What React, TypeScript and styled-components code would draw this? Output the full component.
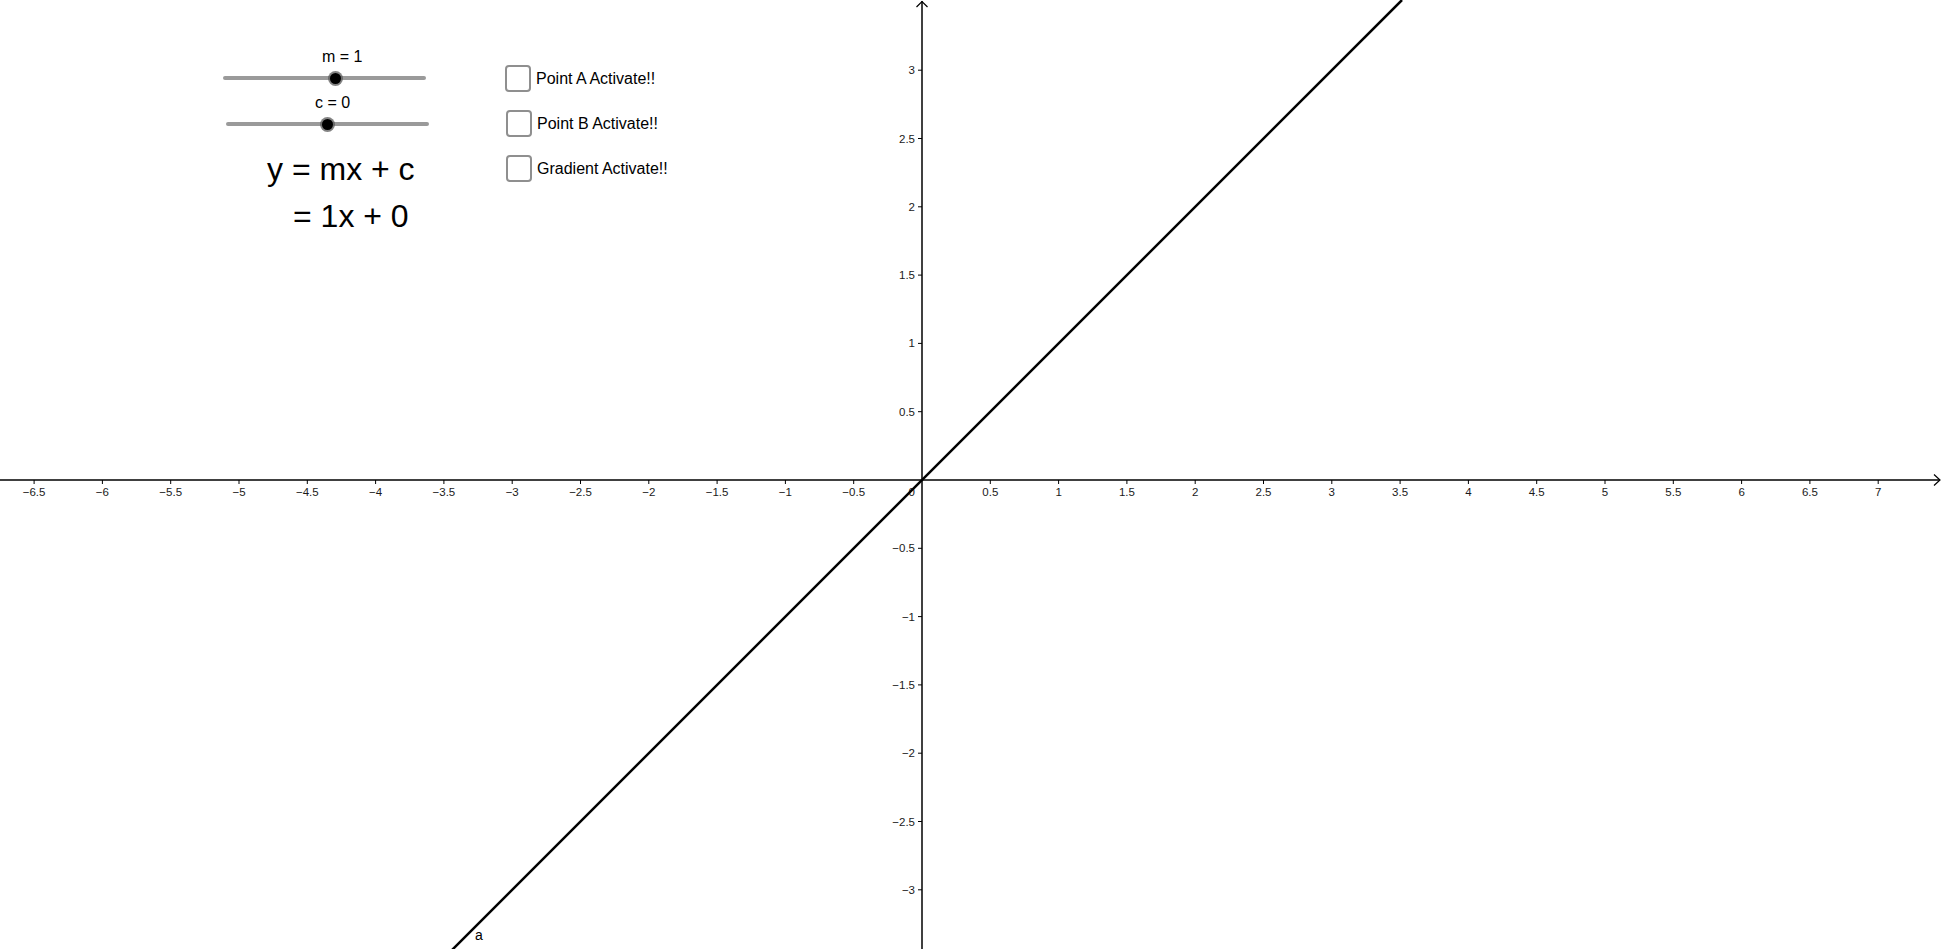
import React from "react";
import styled, { createGlobalStyle } from "styled-components";

const GlobalStyle = createGlobalStyle`
  html, body { margin: 0; padding: 0; background: #ffffff; }
  body { font-family: "Liberation Sans", Arial, sans-serif; color: #000; }
  #root { width: 100vw; height: 100vh; }
`;

const W = 1942;
const H = 949;
const OX = 922;
const OY = 480;
const U = 136.6;

const Page = styled.div`
  position: relative;
  width: 100%;
  height: 100%;
  overflow: hidden;
  background: #ffffff;
`;

const GraphSvg = styled.svg`
  display: block;
`;

const AxisLabel = styled.text`
  font-family: "Liberation Sans", Arial, sans-serif;
  font-size: 11.5px;
  fill: #1a1a1a;
`;

const CurveLabel = styled.text`
  font-family: "Liberation Sans", Arial, sans-serif;
  font-size: 14px;
  fill: #000;
`;

const Overlay = styled.div`
  position: absolute;
  top: 0;
  left: 0;
  display: flex;
  align-items: flex-start;
`;

const SliderColumn = styled.div`
  margin-left: 223px;
  padding-top: 48px;
  width: 206px;
  display: flex;
  flex-direction: column;
  gap: 8px;
`;

const SliderBlock = styled.div`
  display: flex;
  flex-direction: column;
  gap: 4px;
`;

const SliderLabel = styled.div<{ $offset: number }>`
  margin-left: ${(p) => p.$offset}px;
  font-size: 16px;
  line-height: 18px;
  height: 18px;
  white-space: nowrap;
`;

const TrackRow = styled.div<{ $offset: number }>`
  margin-left: ${(p) => p.$offset}px;
  width: 203px;
  height: 16px;
  display: flex;
  align-items: center;
`;

const Track = styled.div`
  position: relative;
  width: 100%;
  height: 4px;
  border-radius: 2px;
  background: #9a9a9a;
`;

const Knob = styled.div`
  position: absolute;
  top: 50%;
  width: 11px;
  height: 11px;
  margin-left: -5.5px;
  margin-top: -5.5px;
  border-radius: 50%;
  background: #000;
  box-shadow: 0 0 0 2px rgba(90, 90, 90, 0.75);
`;

const Equation = styled.div`
  margin-top: 6px;
  margin-left: 44px;
  font-size: 32px;
  line-height: 47px;
  white-space: nowrap;
`;

const EquationLine = styled.div<{ $indent: number }>`
  padding-left: ${(p) => p.$indent}px;
`;

const CheckColumn = styled.div`
  margin-left: 76px;
  padding-top: 65px;
  display: flex;
  flex-direction: column;
  gap: 18px;
`;

const CheckRow = styled.label<{ $shift: number }>`
  display: flex;
  align-items: center;
  gap: 5px;
  height: 27px;
  margin-left: ${(p) => p.$shift}px;
  font-size: 16px;
  white-space: nowrap;
  cursor: pointer;
`;

const Box = styled.span`
  box-sizing: border-box;
  width: 26px;
  height: 27px;
  border: 2px solid #8f8f8f;
  border-radius: 4px;
  background: #fff;
`;

type SliderProps = {
  name: string;
  value: number;
  min: number;
  max: number;
  labelOffset: number;
  trackOffset: number;
};

function Slider({ name, value, min, max, labelOffset, trackOffset }: SliderProps) {
  const pct = ((value - min) / (max - min)) * 100;
  return (
    <SliderBlock>
      <SliderLabel $offset={labelOffset}>
        {name} = {value}
      </SliderLabel>
      <TrackRow $offset={trackOffset}>
        <Track>
          <Knob style={{ left: `${pct}%` }} />
        </Track>
      </TrackRow>
    </SliderBlock>
  );
}

function fmt(v: number) {
  const s = Math.abs(v).toString();
  return v < 0 ? `\u2212${s}` : s;
}

function Graph() {
  const xs: number[] = [];
  for (let i = -13; i <= 14; i++) if (i !== 0) xs.push(i / 2);
  const ys: number[] = [];
  for (let i = -6; i <= 6; i++) if (i !== 0) ys.push(i / 2);

  const x0 = 0;
  const y0 = OY + OX;
  const x1 = OX + OY;
  const y1 = 0;

  return (
    <GraphSvg width={W} height={H} viewBox={`0 0 ${W} ${H}`}>
      <line x1={0} y1={OY} x2={1940} y2={OY} stroke="#000" strokeWidth={1.5} />
      <line x1={OX} y1={1} x2={OX} y2={H} stroke="#000" strokeWidth={1.5} />
      <polyline points={`1934,474.5 1940,480 1934,485.5`} fill="none" stroke="#000" strokeWidth={1.2} />
      <polyline points={`916.5,7 922,1.5 927.5,7`} fill="none" stroke="#000" strokeWidth={1.2} />

      {xs.map((v) => {
        const x = OX + v * U;
        return (
          <g key={`x${v}`}>
            <line x1={x} y1={OY} x2={x} y2={OY + 4} stroke="#000" strokeWidth={1} />
            <AxisLabel x={x} y={496} textAnchor="middle">
              {fmt(v)}
            </AxisLabel>
          </g>
        );
      })}
      {ys.map((v) => {
        const y = OY - v * U;
        return (
          <g key={`y${v}`}>
            <line x1={OX - 4} y1={y} x2={OX} y2={y} stroke="#000" strokeWidth={1} />
            <AxisLabel x={915} y={y + 4} textAnchor="end">
              {fmt(v)}
            </AxisLabel>
          </g>
        );
      })}
      <AxisLabel x={915} y={496} textAnchor="end">
        0
      </AxisLabel>

      <line x1={x0} y1={y0} x2={x1} y2={y1} stroke="#000" strokeWidth={2.5} />
      <CurveLabel x={475} y={940}>
        a
      </CurveLabel>
    </GraphSvg>
  );
}

export default function App() {
  return (
    <>
      <GlobalStyle />
      <Page>
        <Graph />
        <Overlay>
          <SliderColumn>
            <Slider name="m" value={1} min={-9} max={9} labelOffset={99} trackOffset={0} />
            <Slider name="c" value={0} min={-5} max={5} labelOffset={92} trackOffset={3} />
            <Equation>
              <EquationLine $indent={0}>y = mx + c</EquationLine>
              <EquationLine $indent={26}>= 1x + 0</EquationLine>
            </Equation>
          </SliderColumn>
          <CheckColumn>
            <CheckRow $shift={0}>
              <Box />
              Point A Activate!!
            </CheckRow>
            <CheckRow $shift={1}>
              <Box />
              Point B Activate!!
            </CheckRow>
            <CheckRow $shift={1}>
              <Box />
              Gradient Activate!!
            </CheckRow>
          </CheckColumn>
        </Overlay>
      </Page>
    </>
  );
}
